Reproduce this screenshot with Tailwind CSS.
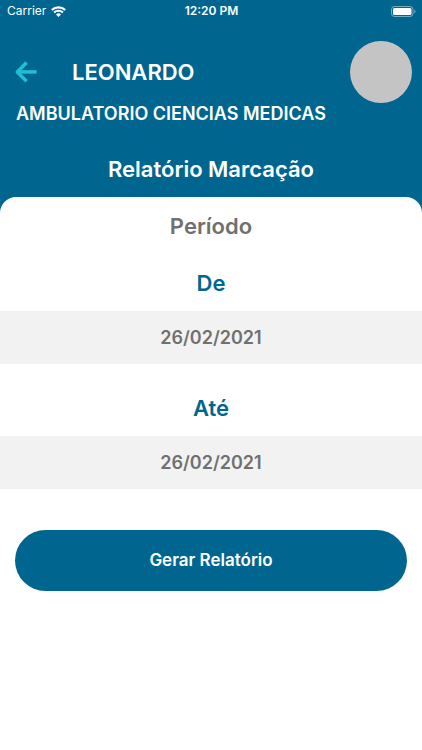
<!DOCTYPE html>
<html lang="pt-BR">
<head>
<meta charset="utf-8">
<meta name="viewport" content="width=device-width, initial-scale=1">
<title>Relatório Marcação</title>
<script src="https://cdn.jsdelivr.net/npm/@tailwindcss/browser@4"></script>
</head>
<body class="min-h-screen bg-white font-['Inter','Liberation_Sans',sans-serif]">
<div class="bg-[#00668f]">
  <div class="grid grid-cols-3 items-center h-[22px] pl-[7px] pr-[6px] text-white">
    <div class="flex items-center gap-[5px] text-[12px] leading-[22px]">
      <span>Carrier</span>
      <svg class="w-[15px] h-[11px]" viewBox="0 0 15 11" fill="none" stroke="#fff" role="img" aria-label="Wi-Fi">
        <path d="M.8 4a9.6 9.6 0 0 1 13.4 0" stroke-width="2.3"/>
        <path d="M3.1 6.6a6.3 6.3 0 0 1 8.8 0" stroke-width="2.1"/>
        <path d="M7.5 11 5 8.5a3.6 3.6 0 0 1 5 0z" fill="#fff" stroke="none"/>
      </svg>
    </div>
    <span class="text-center text-[12px] leading-[22px] font-semibold">12:20 PM</span>
    <svg class="justify-self-end w-[25px] h-[11px]" viewBox="0 0 25 11" role="img" aria-label="Bateria">
      <rect x=".5" y=".5" width="21.5" height="10" rx="3" fill="none" stroke="#fff" stroke-opacity=".45"/>
      <rect x="2" y="2" width="18.5" height="7" rx="1.5" fill="#fff"/>
      <path d="M23.3 3.7v3.6c.7-.3 1.2-1 1.2-1.8s-.5-1.5-1.2-1.8z" fill="#fff" fill-opacity=".5"/>
    </svg>
  </div>
  <header class="pt-[19px] pb-[14px] text-white font-semibold">
    <div class="flex items-center pl-[14px] pr-[10px]">
      <a href="#" aria-label="Voltar" class="w-[58px]">
        <svg class="w-6 h-6" viewBox="0 0 24 24" fill="none" stroke="#1fc0cf" stroke-width="3.5" stroke-linejoin="round">
          <path d="M22.6 11.9H4" />
          <path d="M12.6 2.6 3.3 11.9l9.3 9.3"/>
        </svg>
      </a>
      <span class="flex-1 text-[22px] leading-7">LEONARDO</span>
      <div class="size-[62px] rounded-full bg-[#c4c4c4]"></div>
    </div>
    <p class="px-4 text-[18px] leading-[22px]">AMBULATORIO CIENCIAS MEDICAS</p>
    <h1 class="mt-[30px] text-center text-[22px] leading-7">Relatório Marcação</h1>
  </header>
  <main class="rounded-t-[16px] bg-white pt-[15px] font-semibold">
    <form>
      <h2 class="text-center text-[22px] leading-7 text-[#707070]">Período</h2>
      <label for="de" class="mt-[29px] block text-center text-[22px] leading-7 text-[#00668f]">De</label>
      <input id="de" type="text" value="26/02/2021" class="mt-[14px] block h-[53px] w-full bg-[#f2f2f2] text-center text-[18px] text-[#707070] outline-none">
      <label for="ate" class="mt-[30px] block text-center text-[22px] leading-7 text-[#00668f]">Até</label>
      <input id="ate" type="text" value="26/02/2021" class="mt-[14px] block h-[53px] w-full bg-[#f2f2f2] text-center text-[18px] text-[#707070] outline-none">
      <div class="px-[15px] pt-[41px]">
        <button type="button" class="h-[61px] w-full rounded-full bg-[#00668f] text-[17px] text-white">Gerar Relatório</button>
      </div>
    </form>
  </main>
</div>
</body>
</html>
